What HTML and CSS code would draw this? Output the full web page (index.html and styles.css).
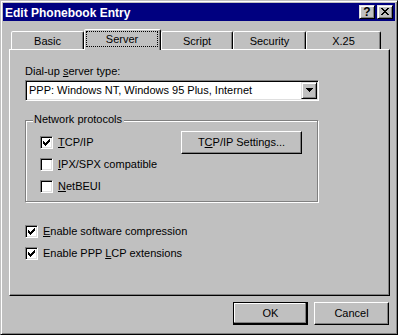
FILE: index.html
```html
<!DOCTYPE html>
<html>
<head>
<meta charset="utf-8">
<title>Edit Phonebook Entry</title>
<link rel="stylesheet" href="styles.css">
</head>
<body>
<div class="window">
  <div class="titlebar">
    <span class="title">Edit Phonebook Entry</span>
    <div class="caption-btns">
      <span class="cap-btn help">?</span>
      <span class="cap-btn close"><svg width="8" height="7" viewBox="0 0 8 7" shape-rendering="crispEdges"><path fill="#000" d="M0 0h2v1h-2z M6 0h2v1h-2z M1 1h2v1h-2z M5 1h2v1h-2z M2 2h4v1h-4z M3 3h2v1h-2z M2 4h4v1h-4z M1 5h2v1h-2z M5 5h2v1h-2z M0 6h2v1h-2z M6 6h2v1h-2z"/></svg></span>
    </div>
  </div>

  <div class="tabs">
    <div class="tab tab-basic">Basic</div>
    <div class="tab tab-server selected"><span class="focus">Server</span></div>
    <div class="tab tab-script">Script</div>
    <div class="tab tab-security">Security</div>
    <div class="tab tab-x25">X.25</div>
  </div>

  <div class="panel">
    <div class="field-label">Dial-up <u>s</u>erver type:</div>
    <div class="combo">
      <span class="combo-text">PPP: Windows NT, Windows 95 Plus, Internet</span>
      <span class="combo-btn"><svg width="7" height="4" viewBox="0 0 7 4" shape-rendering="crispEdges"><path fill="#000" d="M0 0h7v1h-7z M1 1h5v1h-5z M2 2h3v1h-3z M3 3h1v1h-1z"/></svg></span>
    </div>

    <div class="group">
      <span class="group-label">Network protocols</span>
      <div class="grow grow-1">
        <span class="check"><svg width="7" height="7" viewBox="0 0 7 7" shape-rendering="crispEdges"><path fill="#000" d="M6 0h1v1h-1z M5 1h2v1h-2z M0 2h1v1h-1z M4 2h3v1h-3z M0 3h2v1h-2z M3 3h3v1h-3z M0 4h5v1h-5z M1 5h3v1h-3z M2 6h1v1h-1z"/></svg></span>
        <span class="lbl"><u>T</u>CP/IP</span>
        <span class="btn btn-settings">T<u>C</u>P/IP Settings...</span>
      </div>
      <div class="grow grow-2">
        <span class="check"></span>
        <span class="lbl"><u>I</u>PX/SPX compatible</span>
      </div>
      <div class="grow grow-3">
        <span class="check"></span>
        <span class="lbl"><u>N</u>etBEUI</span>
      </div>
    </div>

    <div class="opt opt-1">
      <span class="check"><svg width="7" height="7" viewBox="0 0 7 7" shape-rendering="crispEdges"><path fill="#000" d="M6 0h1v1h-1z M5 1h2v1h-2z M0 2h1v1h-1z M4 2h3v1h-3z M0 3h2v1h-2z M3 3h3v1h-3z M0 4h5v1h-5z M1 5h3v1h-3z M2 6h1v1h-1z"/></svg></span>
      <span class="lbl"><u>E</u>nable software compression</span>
    </div>
    <div class="opt opt-2">
      <span class="check"><svg width="7" height="7" viewBox="0 0 7 7" shape-rendering="crispEdges"><path fill="#000" d="M6 0h1v1h-1z M5 1h2v1h-2z M0 2h1v1h-1z M4 2h3v1h-3z M0 3h2v1h-2z M3 3h3v1h-3z M0 4h5v1h-5z M1 5h3v1h-3z M2 6h1v1h-1z"/></svg></span>
      <span class="lbl">Enable PPP <u>L</u>CP extensions</span>
    </div>
  </div>

  <div class="buttons">
    <span class="btn btn-default">OK</span>
    <span class="btn">Cancel</span>
  </div>
</div>
</body>
</html>
```

FILE: styles.css
```css
* {
  box-sizing: border-box;
}

html,
body {
  margin: 0;
  padding: 0;
}

body {
  background: #c0c0c0;
  font-family: "Liberation Sans", Arial, sans-serif;
  font-size: 11px;
  line-height: 13px;
  color: #000;
}

u {
  text-decoration: underline;
  text-underline-offset: 1px;
}

.window {
  width: 398px;
  height: 335px;
  background: #c0c0c0;
  border: 1px solid;
  border-color: #c0c0c0 #000 #000 #c0c0c0;
  box-shadow: inset 1px 1px #fff, inset -1px -1px #808080;
  padding: 2px;
  display: flex;
  flex-direction: column;
}

/* Title bar */
.titlebar {
  height: 18px;
  background: #000080;
  color: #fff;
  display: flex;
  align-items: flex-start;
}

.title {
  font-weight: bold;
  font-size: 12px;
  line-height: 14px;
  margin-top: 3px;
  padding-left: 2px;
  white-space: nowrap;
}

.caption-btns {
  margin-left: auto;
  margin-top: 2px;
  margin-right: 2px;
  display: flex;
  gap: 2px;
}

.cap-btn {
  width: 16px;
  height: 14px;
  background: #c0c0c0;
  border: 1px solid;
  border-color: #dfdfdf #000 #000 #dfdfdf;
  box-shadow: inset 1px 1px #fff, inset -1px -1px #808080;
  display: flex;
  align-items: center;
  justify-content: center;
  color: #000;
}

.cap-btn.help {
  font-weight: bold;
  font-size: 12px;
  line-height: 12px;
  padding-bottom: 1px;
}

.cap-btn.close svg {
  display: block;
  margin-right: 1px;
  margin-bottom: 1px;
}

/* Tabs */
.tabs {
  margin-top: 8px;
  margin-left: 8px;
  height: 20px;
  display: flex;
  align-items: flex-end;
}

.tab {
  height: 18px;
  border: 1px solid;
  border-bottom: 0;
  border-color: #fff #000 transparent #fff;
  border-radius: 2px 2px 0 0;
  box-shadow: inset -1px 0 #808080;
  background: #c0c0c0;
  text-align: center;
  padding-top: 3px;
  white-space: nowrap;
}

.tab-basic { width: 73px; }
.tab-server { width: 77px; }
.tab-script { width: 72px; }
.tab-security { width: 73px; }
.tab-x25 { width: 75px; }

.tab.selected {
  height: 21px;
  margin-bottom: -1px;
  position: relative;
  z-index: 1;
  padding-top: 1px;
}

.focus {
  display: block;
  height: 16px;
  margin: 0 2px 0 1px;
  border: 1px dotted #000;
  padding-top: 1px;
  line-height: 13px;
}

/* Panel */
.panel {
  width: 381px;
  height: 247px;
  margin-left: 6px;
  border: 1px solid;
  border-color: #fff #000 #000 #fff;
  box-shadow: inset -1px -1px #808080;
  padding: 15px 0 0 15px;
  display: flex;
  flex-direction: column;
  align-items: flex-start;
}

.field-label {
  height: 13px;
  white-space: nowrap;
}

.combo {
  margin-top: 2px;
  width: 294px;
  height: 21px;
  background: #fff;
  border: 1px solid;
  border-color: #808080 #fff #fff #808080;
  box-shadow: inset 1px 1px #000, inset -1px -1px #dfdfdf;
  padding: 1px;
  display: flex;
}

.combo-text {
  flex: 1;
  padding-left: 2px;
  line-height: 17px;
  white-space: nowrap;
  overflow: hidden;
}

.combo-btn {
  width: 16px;
  height: 17px;
  background: #c0c0c0;
  border: 1px solid;
  border-color: #dfdfdf #000 #000 #dfdfdf;
  box-shadow: inset 1px 1px #fff, inset -1px -1px #808080;
  display: flex;
  align-items: center;
  justify-content: center;
}

.combo-btn svg {
  display: block;
  margin-bottom: 1px;
}

/* Group box */
.group {
  margin-top: 19px;
  width: 293px;
  border: 1px solid #808080;
  box-shadow: inset 1px 1px #fff, 1px 1px #fff;
  padding: 0 15px 8px 0;
  display: flex;
  flex-direction: column;
}

.group-label {
  align-self: flex-start;
  height: 13px;
  margin: -8px 0 0 7px;
  padding: 0 2px 0 1px;
  background: #c0c0c0;
  white-space: nowrap;
}

.grow {
  display: flex;
  align-items: center;
  padding-left: 14px;
}

.grow-1 {
  margin-top: 5px;
  height: 23px;
}

.grow-2 {
  margin-top: 4px;
  height: 13px;
}

.grow-3 {
  margin-top: 9px;
  height: 13px;
}

.check {
  width: 13px;
  height: 13px;
  flex: none;
  background: #fff;
  border: 1px solid;
  border-color: #808080 #fff #fff #808080;
  box-shadow: inset 1px 1px #000, inset -1px -1px #dfdfdf;
  padding: 2px 0 0 2px;
  margin-right: 5px;
}

.check svg {
  display: block;
}

.lbl {
  white-space: nowrap;
  line-height: 13px;
}

/* Buttons */
.btn {
  display: block;
  height: 23px;
  background: #c0c0c0;
  border: 1px solid;
  border-color: #fff #000 #000 #fff;
  box-shadow: inset -1px -1px #808080;
  text-align: center;
  line-height: 21px;
  white-space: nowrap;
}

.btn-settings {
  margin-left: auto;
  width: 121px;
}

.opt {
  display: flex;
  align-items: center;
  height: 13px;
}

.opt-1 {
  margin-top: 23px;
}

.opt-2 {
  margin-top: 9px;
}

.buttons {
  margin-top: 6px;
  padding-right: 6px;
  display: flex;
  justify-content: flex-end;
  gap: 6px;
}

.buttons .btn {
  width: 75px;
}

.btn.btn-default {
  border-color: #000;
  box-shadow: inset -1px -1px #000, inset -2px -2px #808080, inset 1px 1px #fff;
}
```
